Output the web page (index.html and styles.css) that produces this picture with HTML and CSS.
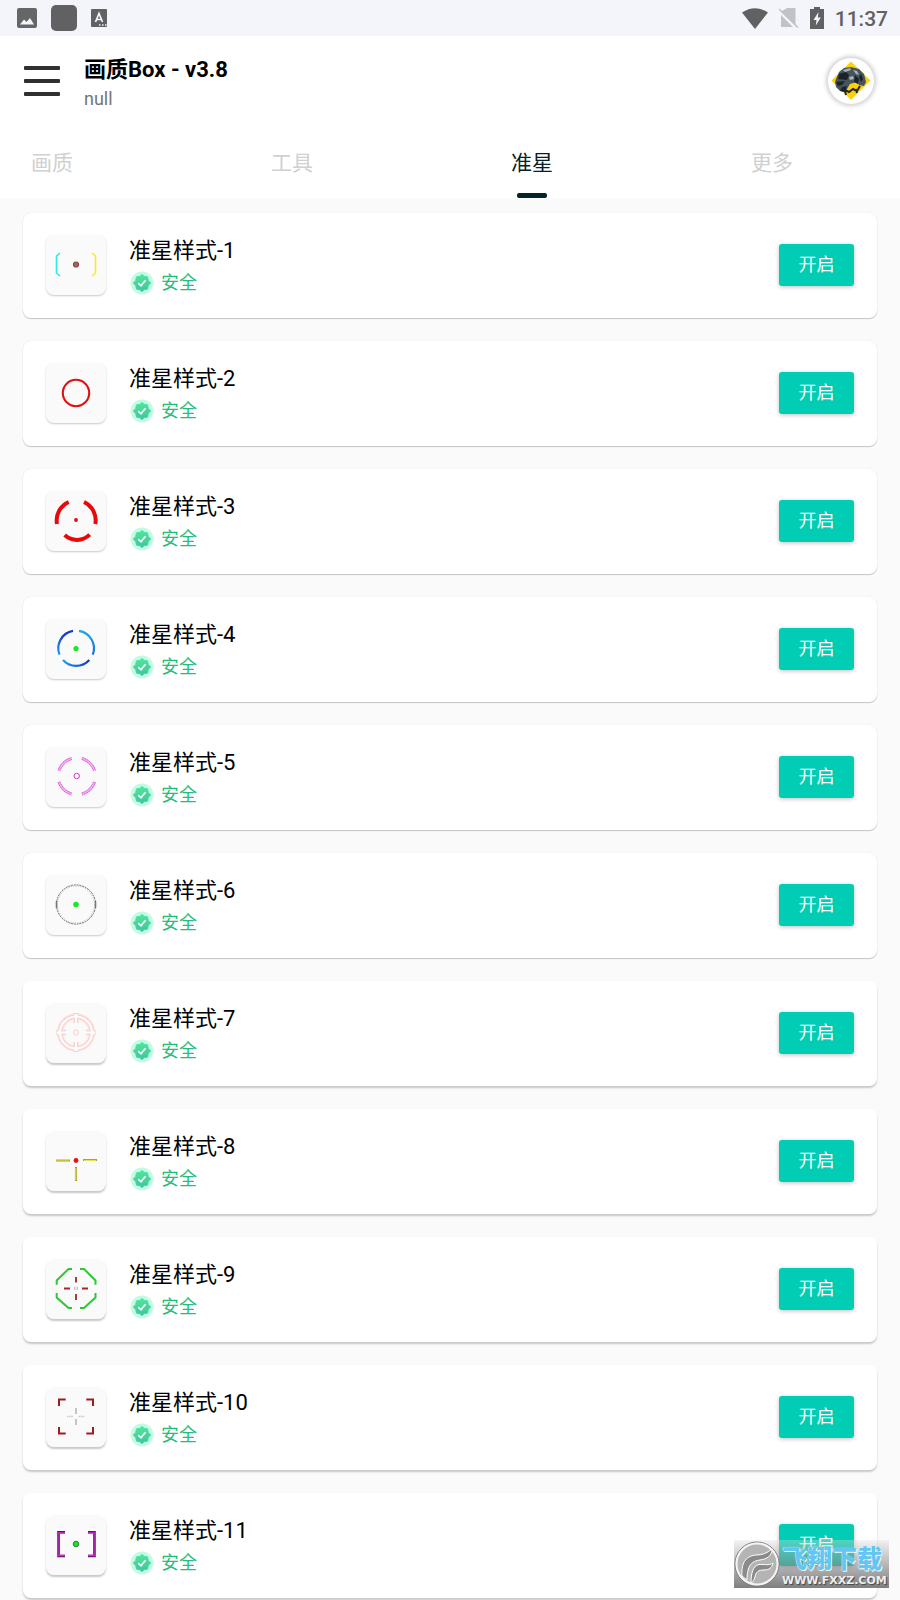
FILE: index.html
```html
<!DOCTYPE html>
<html lang="zh-CN">
<head>
<meta charset="utf-8">
<meta name="viewport" content="width=device-width, initial-scale=1">
<title>画质Box</title>
<link rel="stylesheet" href="styles.css">
</head>
<body>
<svg class="defs" aria-hidden="true">
  <symbol id="badge" viewBox="0 0 24 24">
    <circle cx="12" cy="12" r="11.5" fill="#c4fbe2"/>
    <path fill="url(#badge-fill)" d="M12 3.4 14.2 5.4 17.6 5.8 18.2 9.4 20.6 12 18.2 14.6 17.6 18 14.2 18.6 12 20.6 9.8 18.6 6.4 18 5.8 14.6 3.4 12 5.8 9.4 6.4 5.8 9.8 5.4Z" stroke="url(#badge-fill)" stroke-width="1" stroke-linejoin="round"/>
    <path d="M8.2 12.2 11 14.8 15.4 9.2" fill="none" stroke="#fff" stroke-width="1.7"/>
  </symbol>
  <linearGradient id="badge-fill" x1="0" y1="0" x2="0" y2="1"><stop offset="0" stop-color="#4fe59d"/><stop offset="1" stop-color="#3fc4a0"/></linearGradient>
  <linearGradient id="blue" x1="0" y1="0" x2="1" y2="0"><stop offset="0" stop-color="#1aa0e8"/><stop offset="1" stop-color="#1438cc"/></linearGradient>
  <linearGradient id="blue-left" x1="0" y1="1" x2="1" y2="0"><stop offset="0" stop-color="#1e9ae6"/><stop offset=".6" stop-color="#1438cc"/></linearGradient>
  <linearGradient id="blue-right" x1="0" y1="0" x2="0" y2="1"><stop offset="0" stop-color="#1ea8e6"/><stop offset="1" stop-color="#1c6cdc"/></linearGradient>
</svg>

<div class="status">
  <div class="status-group">
    <svg class="status-photo" viewBox="0 0 20 20"><rect width="20" height="20" rx="2" fill="#666"/><path d="M3 16.5 7 11.5 9.5 14 13 10 17 16.5Z" fill="#f4f5fa"/></svg>
    <svg class="status-square" viewBox="0 0 26 26"><rect width="26" height="26" rx="5" fill="#616163"/></svg>
    <svg class="status-key" viewBox="0 0 16 18"><rect width="16" height="18" rx="1" fill="#616163"/><path d="M4.500 13 8 4.500 11.500 13M5.800 10.500H10.200" fill="none" stroke="#f4f5fa" stroke-width="1.700"/><path d="M8 16h1.500M11 16h1.500M14 16h1.500" stroke="#f4f5fa" stroke-width="1.300"/></svg>
  </div>
  <div class="status-group status-right">
    <svg class="status-wifi" viewBox="0 0 26 21"><path d="M0 4.500Q13-4 26 4.500L13 21Z" fill="#616163"/></svg>
    <svg class="status-sim" viewBox="0 0 20 20"><path d="M8 0H16.500V17.500L2 3.800ZM2 7 14 19H2Z" fill="#c1c2c6"/><path d="M0 1 19 19.500" stroke="#c1c2c6" stroke-width="1.600"/></svg>
    <svg class="status-battery" viewBox="0 0 14 22"><path d="M4 0H10V2H14V22H0V2H4Z" fill="#616163"/><path d="M8.500 5 3.500 13H6.500L5.800 18.500 10.800 10.500H7.800Z" fill="#f4f5fa"/></svg>
    <span class="clock">11:37</span>
  </div>
</div>

<header class="header">
  <div class="bar">
    <button class="menu" type="button" aria-label="菜单"><span></span><span></span><span></span></button>
    <div class="brand">
      <h1>画质Box - v3.8</h1>
      <p>null</p>
    </div>
    <div class="avatar">
      <svg viewBox="0 0 42 42">
        <path d="M21 1.500 40.500 20.500 21 40 1.500 20.500Z" fill="#fdd008"/>
        <path d="M6 19 9 12 14 8 21 7 29 9 34 14 36 22 34 26 29 25 27 22 20 24 17 29 15 32 10 31 6 27 5 22Z" fill="#46545c"/>
        <path d="M9 14 16 12 19 15 17 20 8 19ZM6 22 15 21 12 25 8 26ZM25 15 29 19 28 24 24 22ZM31 14 33 19 31 22 29 17ZM12 27 17 26 15 32 10 31Z" fill="#1c2328"/>
        <path d="M13 10 20 8 21 10 15 12ZM23 10 27 11 29 15 26 14ZM19 17 23 16 24 19 20 20Z" fill="#a5b4b8"/>
        <path d="M15 30 19 32 23 29 27 31 30 26M16 35 15 31M27 33 26 29" fill="none" stroke="#20262a" stroke-width="2"/>
      </svg>
    </div>
  </div>
  <nav class="tabs" role="tablist">
    <button type="button" role="tab">画质</button>
    <button type="button" role="tab">工具</button>
    <button type="button" role="tab" class="active" aria-selected="true">准星</button>
    <button type="button" role="tab">更多</button>
  </nav>
</header>

<main class="list">
  <article class="card">
    <svg class="tile" viewBox="0 0 60 60" fill="none"><path d="M14 18 10.500 21V38L14 41" stroke="#2be8e8" stroke-width="1.600"/><path d="M46 18 49.500 21V38L46 41" stroke="#f4f020" stroke-width="1.600"/><circle cx="30" cy="29.500" r="2.500" fill="#777" stroke="#a33d3a" stroke-width="1.200"/></svg>
    <div class="info"><h2>准星样式-1</h2><p><svg class="badge"><use href="#badge"/></svg>安全</p></div>
    <button class="open" type="button">开启</button>
  </article>
  <article class="card">
    <svg class="tile" viewBox="0 0 60 60" fill="none"><circle cx="30" cy="30" r="13.200" stroke="#e01010" stroke-width="2.100"/></svg>
    <div class="info"><h2>准星样式-2</h2><p><svg class="badge"><use href="#badge"/></svg>安全</p></div>
    <button class="open" type="button">开启</button>
  </article>
  <article class="card">
    <svg class="tile" viewBox="0 0 60 60" fill="none"><path d="M22.700 11A20 20 0 0 0 11 33M38 11A20 20 0 0 1 49.300 33M18.700 44A18 18 0 0 0 43.700 43.700" stroke="#e80a0a" stroke-width="4"/><circle cx="30" cy="29" r="1.900" fill="#e80a0a"/></svg>
    <div class="info"><h2>准星样式-3</h2><p><svg class="badge"><use href="#badge"/></svg>安全</p></div>
    <button class="open" type="button">开启</button>
  </article>
  <article class="card">
    <svg class="tile" viewBox="0 0 60 60" fill="none" stroke-width="2.200"><path d="M27 11.900A17.700 17.700 0 0 0 13.500 35.700" stroke="url(#blue-left)"/><path d="M33 11.900A17.700 17.700 0 0 1 46.800 35.700" stroke="url(#blue-right)"/><path d="M17 41A17.700 17.700 0 0 0 43.300 41" stroke="url(#blue)"/><circle cx="30" cy="29.500" r="2.600" fill="#18e828"/></svg>
    <div class="info"><h2>准星样式-4</h2><p><svg class="badge"><use href="#badge"/></svg>安全</p></div>
    <button class="open" type="button">开启</button>
  </article>
  <article class="card">
    <svg class="tile" viewBox="0 0 60 60" fill="none"><path d="M25.500 11.500A19 19 0 0 0 12.800 23.500M36 11.500A19 19 0 0 1 48.700 23.500M12.800 35A19 19 0 0 0 25.500 47M48.700 35A19 19 0 0 1 36 47" stroke="#f2b4f2" stroke-width="2.400"/><path d="M25.500 10.500A19.500 19.500 0 0 0 12 23.500M36 10.500A19.500 19.500 0 0 1 49.500 23.500M12 35A19.500 19.500 0 0 0 25.500 48M49.500 35A19.500 19.500 0 0 1 36 48M26 12.500A18 18 0 0 0 14 24M35.500 12.500A18 18 0 0 1 47.500 24M14 34.500A18 18 0 0 0 26 46M47.500 34.500A18 18 0 0 1 35.500 46" stroke="#d13bd6" stroke-width=".8" stroke-dasharray="2 .6"/><circle cx="30.700" cy="29" r="2.700" stroke="#d13bd6"/></svg>
    <div class="info"><h2>准星样式-5</h2><p><svg class="badge"><use href="#badge"/></svg>安全</p></div>
    <button class="open" type="button">开启</button>
  </article>
  <article class="card">
    <svg class="tile" viewBox="0 0 60 60" fill="none"><circle cx="30" cy="29.500" r="19.600" stroke="#555" stroke-width=".8" stroke-dasharray="2 .8"/><circle cx="30" cy="29.500" r="18.500" stroke="#888" stroke-width=".7" stroke-dasharray="1 1.400"/><path d="M10.500 26V33M49.500 26V33" stroke="#777" stroke-width="1.500"/><circle cx="30" cy="29.500" r="2.800" fill="#18e828"/></svg>
    <div class="info"><h2>准星样式-6</h2><p><svg class="badge"><use href="#badge"/></svg>安全</p></div>
    <button class="open" type="button">开启</button>
  </article>
  <article class="card">
    <svg class="tile" viewBox="0 0 60 60" fill="none"><g stroke="#fbe4e2" stroke-width="6.500"><circle cx="30" cy="29.500" r="16"/><path d="M30 10V20M30 39V49M10.500 29.500H20M40 29.500H49.500"/></g><g stroke="#f8cecb" stroke-width="4"><circle cx="30" cy="29.500" r="16"/><path d="M30 10V20M30 39V49M10.500 29.500H20M40 29.500H49.500"/></g><circle cx="30" cy="29.500" r="3" fill="#f9dcda"/><g stroke="#fff" stroke-width="2.100"><circle cx="30" cy="29.500" r="16"/><path d="M30 11V21M30 38V48M11 29.500H21M39 29.500H49"/></g><path d="M28 12.500H32M28 46.500H32M13 27.500V31.500M47 27.500V31.500" stroke="#fff" stroke-width="1.500"/><circle cx="30" cy="29.500" r="1.600" fill="#fff"/></svg>
    <div class="info"><h2>准星样式-7</h2><p><svg class="badge"><use href="#badge"/></svg>安全</p></div>
    <button class="open" type="button">开启</button>
  </article>
  <article class="card">
    <svg class="tile" viewBox="0 0 60 60" fill="none"><path d="M10 29.500H24M37 29H51M30 36V50" stroke="#aaa32e" stroke-width="2.200"/><path d="M10 29H23M38 29.500H50M29.800 37V49" stroke="#e6e052" stroke-width="1.100"/><circle cx="30" cy="29.500" r="2.400" fill="#e01414"/></svg>
    <div class="info"><h2>准星样式-8</h2><p><svg class="badge"><use href="#badge"/></svg>安全</p></div>
    <button class="open" type="button">开启</button>
  </article>
  <article class="card">
    <svg class="tile" viewBox="0 0 60 60" fill="none"><path d="M26 10H22.500L10.700 21.500V25.700M34 10H38L49.500 21.500V25.700M10.700 34V38.500L22.500 49H26M49.500 34V38.500L38 49H34" stroke="#30c637" stroke-width="2"/><path d="M30 18V23.500M30 35V41M18 29.500H24M36 29.500H42" stroke="#a82424" stroke-width="1.800"/><path d="M28.800 27.800V31.200M31.200 27.800V31.200" stroke="#aaa" stroke-width=".9"/></svg>
    <div class="info"><h2>准星样式-9</h2><p><svg class="badge"><use href="#badge"/></svg>安全</p></div>
    <button class="open" type="button">开启</button>
  </article>
  <article class="card">
    <svg class="tile" viewBox="0 0 60 60" fill="none"><path d="M13 19V12.500H19.700M40.300 12.500H47V19M13 40V46.500H19.700M40.300 46.500H47V40" stroke="#a01c1c" stroke-width="2"/><path d="M30 21V27M30 32V38" stroke="#bbb" stroke-width="1.700"/><path d="M21 29.500H27.500M32.500 29.500H39" stroke="#ccc" stroke-width="1.300" stroke-dasharray="1.500 .6"/></svg>
    <div class="info"><h2>准星样式-10</h2><p><svg class="badge"><use href="#badge"/></svg>安全</p></div>
    <button class="open" type="button">开启</button>
  </article>
  <article class="card">
    <svg class="tile" viewBox="0 0 60 60" fill="none"><path d="M19 17.300H12.500V41H19M42 17.300H48.500V41H42" stroke="#5a1060" stroke-width="2.600"/><path d="M19 17.800H12V40.500H19M42 17.800H49V40.500H42" stroke="#d02cd4" stroke-width="1.300"/><circle cx="30" cy="29" r="2.800" fill="#20e02c" stroke="#17701c" stroke-width=".8"/></svg>
    <div class="info"><h2>准星样式-11</h2><p><svg class="badge"><use href="#badge"/></svg>安全</p></div>
    <button class="open" type="button">开启</button>
  </article>
</main>

<aside class="watermark">
  <svg viewBox="0 0 46 46" fill="none"><circle cx="23" cy="23" r="22" fill="#d8d8d8" stroke="#777"/><circle cx="23" cy="23" r="20.500" fill="#b4b4b4" stroke="#f4f4f4" stroke-width="2"/><path d="M8 35C7 20 13 15 22 14 29 14 33 12 38 8 38 15 33 18 26 19 18 20 13 24 13 39Z" fill="#8a8a8a" stroke="#fff"/><path d="M17 42C17 32 19 25 25 23.500 30 23 35 25 39 22 38 27 35 29 30 29 24 29 22 31 21 36 20 39 19 41 17 42Z" fill="#8a8a8a" stroke="#fff"/></svg>
  <div class="watermark-text"><strong>飞翔下载</strong><span>WWW.FXXZ.COM</span></div>
</aside>
</body>
</html>
```

FILE: styles.css
```css
* {
  box-sizing: border-box;
}

body {
  position: relative;
  margin: 0;
  background: #fafafa;
  color: #000;
  font-family: Roboto, "Noto Sans CJK SC", sans-serif;
}

h1,
h2,
p {
  margin: 0;
  font-weight: 400;
}

button {
  margin: 0;
  padding: 0;
  border: 0;
  background: none;
  color: inherit;
  font: inherit;
}

svg {
  display: block;
  flex: none;
}

.defs {
  position: absolute;
  width: 0;
  height: 0;
}

.status {
  display: flex;
  align-items: center;
  justify-content: space-between;
  height: 36px;
  padding: 0 12px 0 17px;
  background: #f4f5fa;
}

.status-group {
  display: flex;
  align-items: center;
  gap: 14px;
}

.status-right {
  gap: 11px;
}

.status-photo {
  width: 20px;
  height: 20px;
}

.status-square {
  width: 26px;
  height: 26px;
}

.status-key {
  width: 16px;
  height: 18px;
}

.status-wifi {
  width: 26px;
  height: 21px;
}

.status-sim {
  width: 20px;
  height: 20px;
}

.status-battery {
  width: 14px;
  height: 22px;
}

.clock {
  padding-top: 2px;
  color: #616163;
  font-size: 21px;
  font-weight: 500;
  line-height: 34px;
}

.header {
  background: #fff;
}

.bar {
  display: flex;
  align-items: center;
  height: 90px;
  padding: 0 26px 0 24px;
}

.menu {
  display: flex;
  flex-direction: column;
  gap: 9px;
  width: 36px;
}

.menu span {
  height: 4px;
  border-radius: 1px;
  background: #303030;
}

.brand {
  flex: 1;
  margin-left: 24px;
  padding-top: 3px;
}

.brand h1 {
  font-size: 22px;
  font-weight: 700;
  line-height: 32px;
}

.brand p {
  color: #757575;
  font-size: 18px;
  line-height: 26px;
}

.avatar {
  display: grid;
  place-items: center;
  width: 46px;
  height: 46px;
  border-radius: 50%;
  background: #fff;
  box-shadow: 0 0 4px 2px #d0d0d0;
}

.avatar svg {
  width: 42px;
  height: 42px;
}

.tabs {
  display: flex;
  justify-content: space-between;
  height: 72px;
  padding: 0 107px 0 31px;
}

.tabs button {
  display: flex;
  flex-direction: column;
  align-items: center;
  justify-content: space-between;
  padding-top: 21px;
  color: #d0d0d0;
  font-size: 21px;
  line-height: 32px;
}

.tabs .active {
  color: #04222a;
}

.tabs .active::after {
  width: 30px;
  height: 5px;
  border-radius: 2px;
  background: #04222a;
  content: "";
}

.list {
  display: flex;
  flex-direction: column;
  gap: 23px;
  padding: 15px 23px 2px;
}

.card {
  display: flex;
  align-items: center;
  height: 105px;
  padding: 0 23px 1px;
  border-radius: 8px;
  background: #fff;
  box-shadow: 0 1px 1px #c4c4c4, 0 0 1px #ddd;
}

.tile {
  width: 60px;
  height: 60px;
  border-radius: 8px;
  background: #fafafa;
  box-shadow: 0 1px 2px #c8c8c8;
}

.card:nth-child(n + 7),
.card:nth-child(n + 7) .tile {
  box-shadow: 0 2px 2px #c8c8c8;
}

.info {
  flex: 1;
  margin-left: 23px;
  padding-top: 4px;
}

.info h2 {
  font-size: 22px;
  line-height: 32px;
}

.info p {
  display: flex;
  align-items: center;
  gap: 7px;
  padding-left: 1px;
  color: #26bd7b;
  font-size: 18px;
  line-height: 32px;
}

.badge {
  width: 24px;
  height: 24px;
}

.open {
  width: 75px;
  height: 42px;
  border-radius: 3px;
  background: #00cdb4;
  box-shadow: 0 1px 4px #c0c0c0;
  color: #fff;
  font-size: 18px;
  line-height: 42px;
}

.watermark {
  position: absolute;
  right: 11px;
  bottom: 12px;
  display: flex;
  align-items: center;
  gap: 2px;
  width: 155px;
  height: 48px;
  background: linear-gradient(rgba(225, 225, 225, .35), rgba(105, 105, 105, .85));
}

.watermark svg {
  width: 46px;
  height: 46px;
}

.watermark-text {
  display: flex;
  flex-direction: column;
  padding-top: 6px;
  color: #eee;
}

.watermark strong {
  color: #63c6f2;
  font-size: 25px;
  font-weight: 900;
  line-height: 28px;
  text-shadow: 0 0 1px #fff, 1px 1px 0 #e8faff;
}

.watermark span {
  font-family: "DejaVu Sans", sans-serif;
  font-size: 11px;
  font-weight: 700;
  line-height: 14px;
  text-shadow: 1px 1px 1px #444;
}
```
